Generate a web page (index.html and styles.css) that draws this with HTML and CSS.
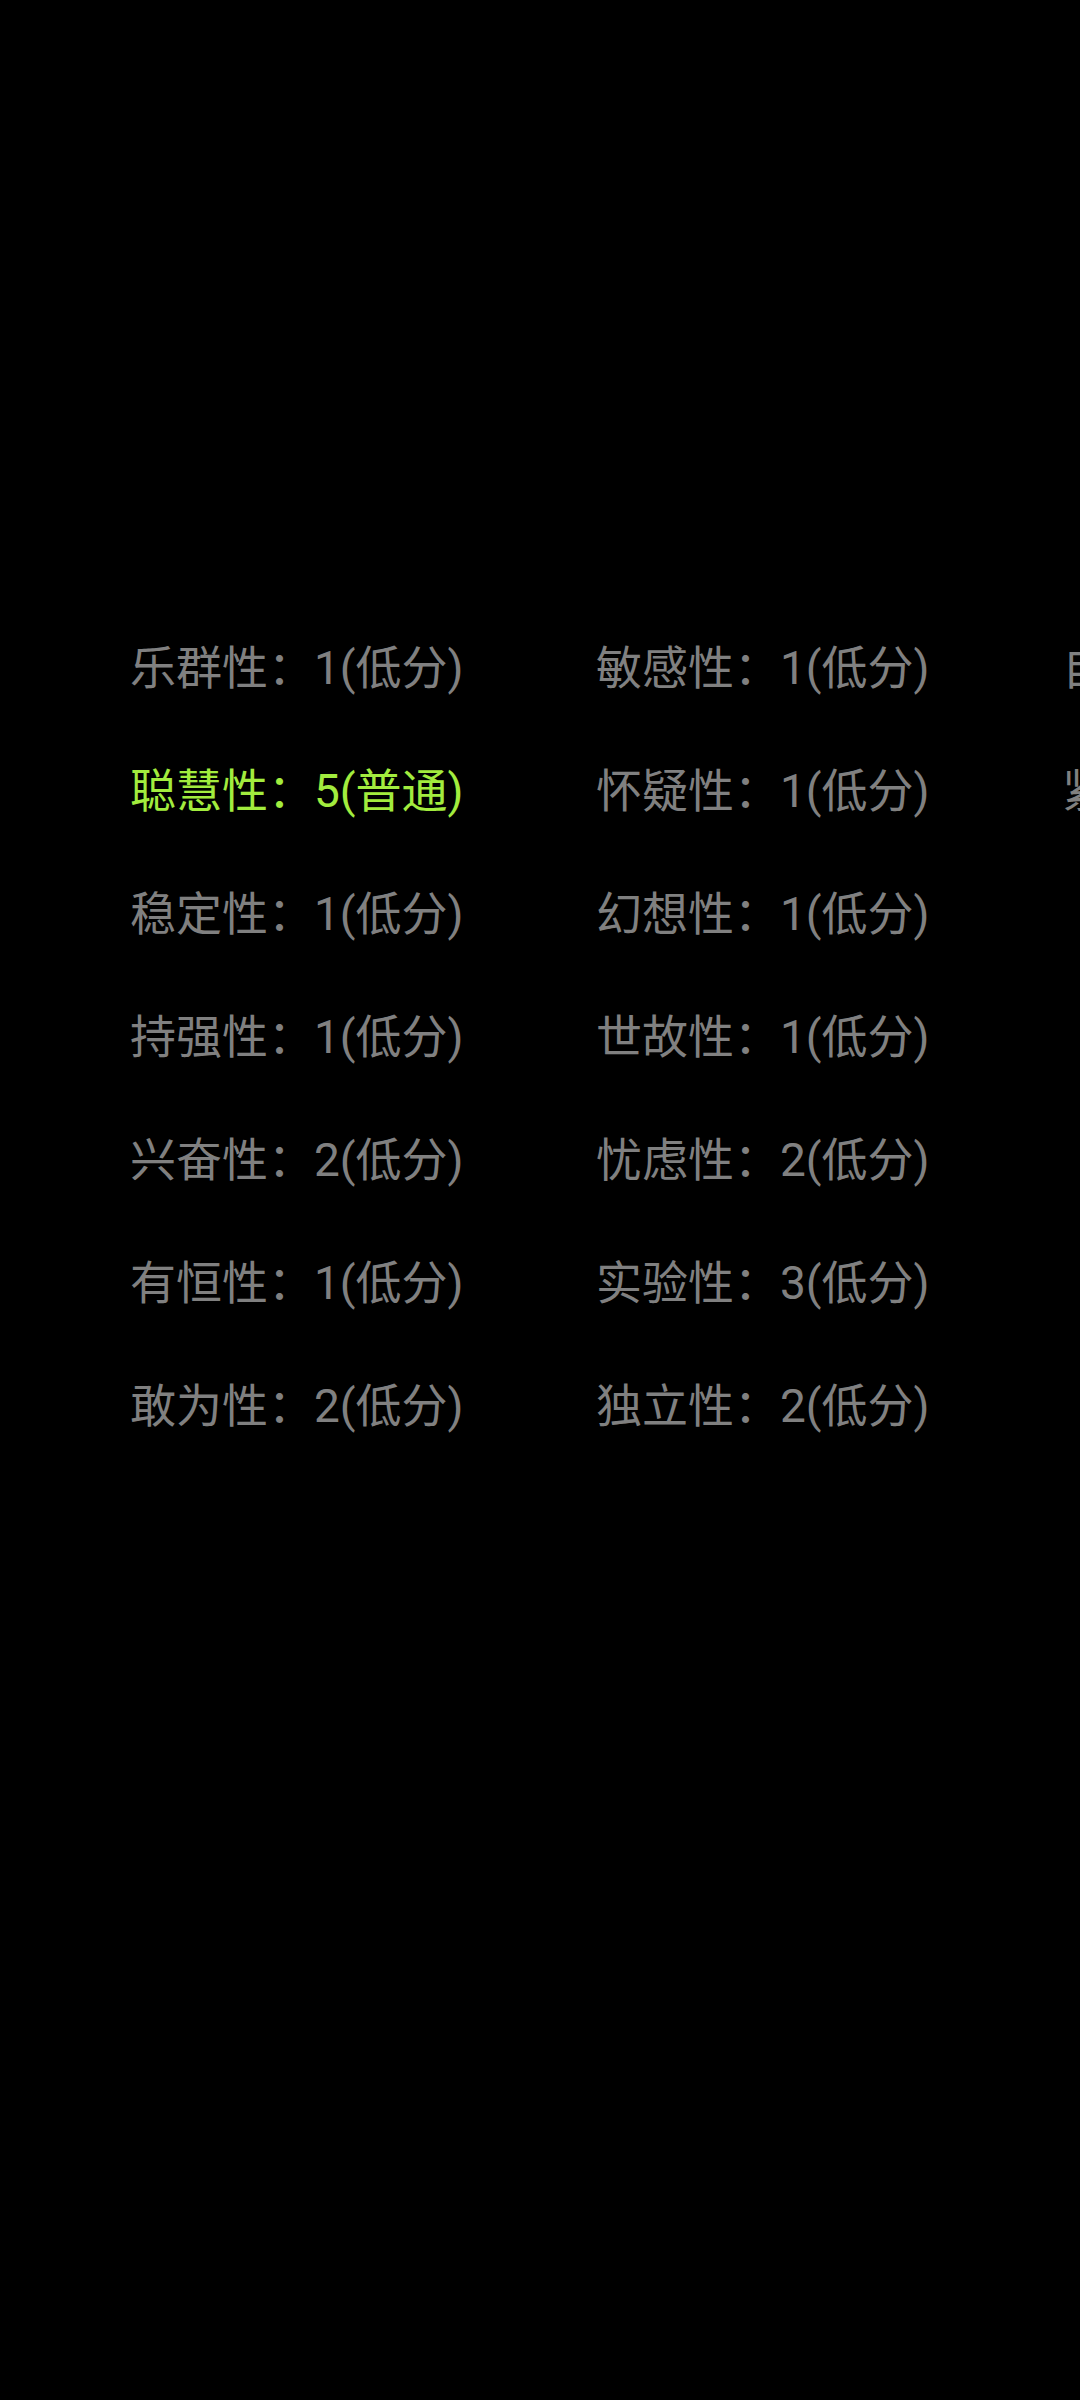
FILE: index.html
```html
<!DOCTYPE html>
<html lang="zh-CN">
<head>
<meta charset="utf-8">
<link rel="stylesheet" href="styles.css">
</head>
<body>
<div class="grid">
  <div class="item">乐群性：1(低分)</div>
  <div class="item hi">聪慧性：5(普通)</div>
  <div class="item">稳定性：1(低分)</div>
  <div class="item">持强性：1(低分)</div>
  <div class="item">兴奋性：2(低分)</div>
  <div class="item">有恒性：1(低分)</div>
  <div class="item">敢为性：2(低分)</div>
  <div class="item">敏感性：1(低分)</div>
  <div class="item">怀疑性：1(低分)</div>
  <div class="item">幻想性：1(低分)</div>
  <div class="item">世故性：1(低分)</div>
  <div class="item">忧虑性：2(低分)</div>
  <div class="item">实验性：3(低分)</div>
  <div class="item">独立性：2(低分)</div>
  <div class="item">自律性：1(低分)</div>
  <div class="item">紧张性：2(低分)</div>
</div>
</body>
</html>
```
FILE: styles.css
```css
html, body {
  margin: 0;
  padding: 0;
  background: #000;
  overflow: hidden;
  width: 1080px;
  height: 2400px;
}
.grid {
  display: grid;
  grid-template-columns: repeat(3, 466px);
  grid-template-rows: repeat(7, 123px);
  grid-auto-flow: column;
  padding: 607px 0 0 130px;
  font-family: "Roboto", "Noto Sans CJK SC", sans-serif;
  font-size: 46px;
}
.item {
  line-height: 123px;
  white-space: nowrap;
  color: #808080;
}
.item.hi {
  color: #a2ec3e;
}
```
